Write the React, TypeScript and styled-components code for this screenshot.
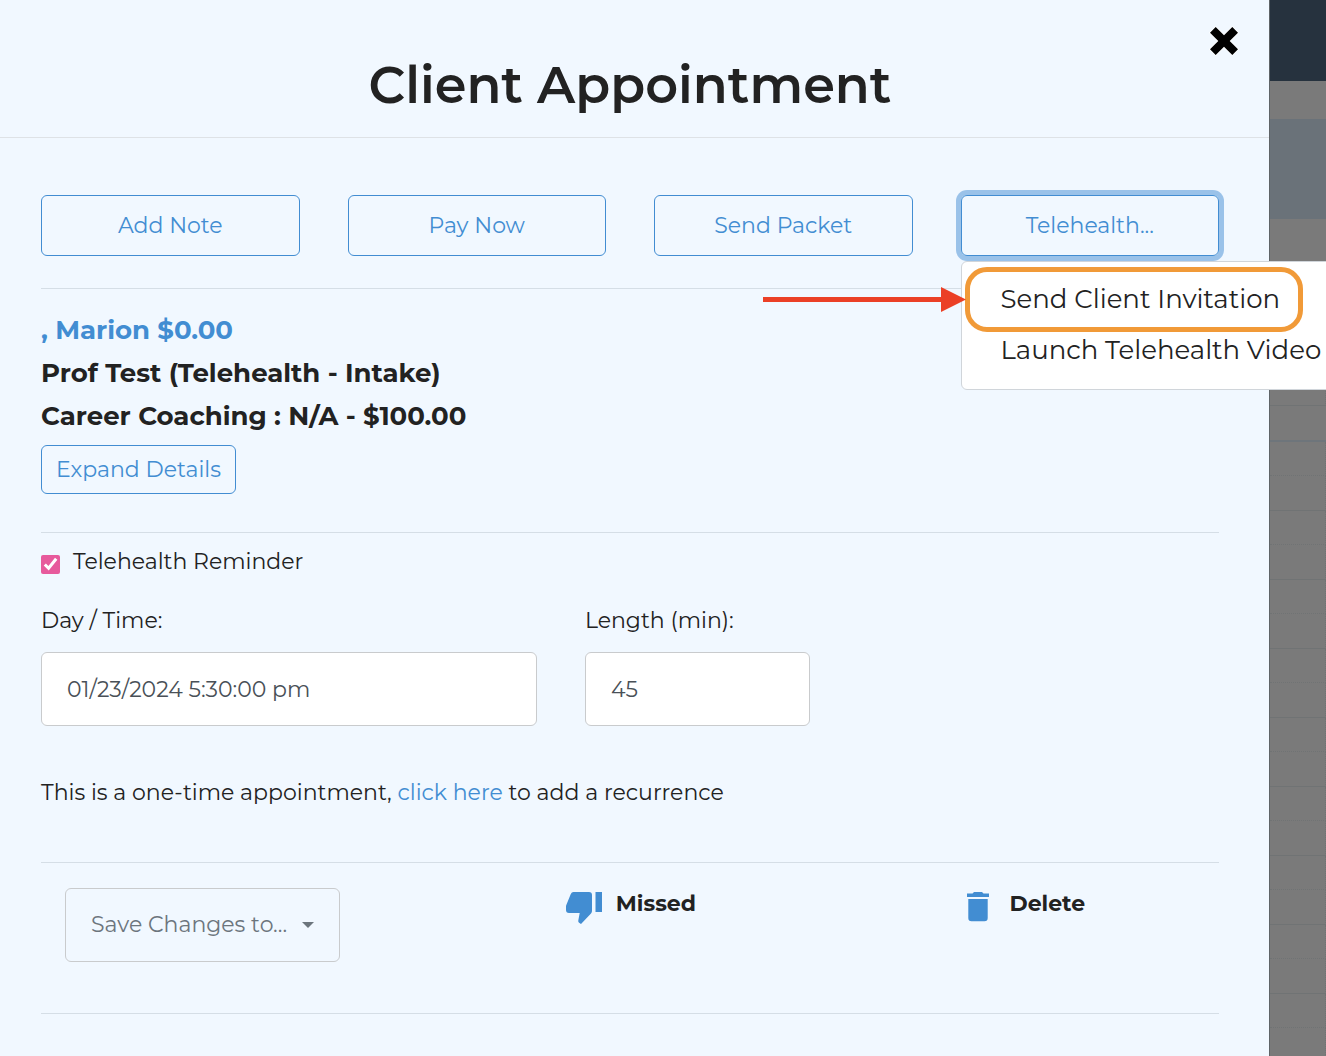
import React from "react";
import styled, { createGlobalStyle } from "styled-components";

const color = {
  panel: "#f1f8ff",
  blue: "#428dd2",
  ink: "#222222",
  rule: "#d5dee6",
  field: "#c9cbcd",
  muted: "#6c757d",
};

const GlobalStyle = createGlobalStyle`
  *, *::before, *::after { box-sizing: border-box; }
  body {
    margin: 0;
    overflow-x: hidden;
    background: #7a7a7a;
    color: ${color.ink};
    font-family: Montserrat, Inter, "Open Sans", sans-serif;
    font-size: 22px;
    line-height: 36px;
  }
  button, input { font: inherit; color: inherit; }
  a { color: ${color.blue}; text-decoration: none; }
  h1, h2, p { margin: 0; }
`;

const Screen = styled.div`
  display: grid;
  grid-template-columns: minmax(0, 1fr) 57px;
  min-height: 100vh;
  overflow: hidden;
`;

const Dialog = styled.section`
  position: relative;
  z-index: 1;
  background: ${color.panel};
`;

const Header = styled.header`
  position: relative;
  padding: 53px 50px 20px 41px;
  border-bottom: 1px solid #dee2e6;
  text-align: center;
`;

const Title = styled.h1`
  font-size: 51px;
  font-weight: 600;
  line-height: 64px;
`;

const CloseButton = styled.button`
  position: absolute;
  top: 24px;
  right: 28px;
  display: flex;
  padding: 0;
  border: 0;
  background: none;
  cursor: pointer;
`;

const Body = styled.div`
  padding: 57px 50px 42px 41px;
`;

const Section = styled.div<{ $pad: string }>`
  padding: ${(p) => p.$pad};
  border-bottom: 1px solid ${color.rule};
`;

const Actions = styled.div`
  display: grid;
  grid-template-columns: repeat(4, minmax(0, 1fr));
  gap: 48px;
`;

const MenuAnchor = styled.div`
  position: relative;
`;

const OutlineButton = styled.button<{ $wide?: boolean; $active?: boolean }>`
  width: ${(p) => (p.$wide ? "100%" : "auto")};
  padding: ${(p) => (p.$wide ? "12px" : "6px 14px")};
  border: 1px solid ${color.blue};
  border-radius: 6px;
  background: transparent;
  color: ${color.blue};
  line-height: 35px;
  white-space: nowrap;
  cursor: pointer;
  box-shadow: ${(p) => (p.$active ? "0 0 0 5px #9ac2e9" : "none")};
`;

const Menu = styled.div`
  position: absolute;
  top: 66px;
  left: 0;
  width: 388px;
  padding: 12px 0 13px;
  border: 1px solid #d0d5da;
  border-radius: 6px;
  background: #fff;
`;

const MenuItem = styled.button`
  display: block;
  width: 100%;
  padding: 0 39px;
  border: 0;
  background: none;
  font-size: 26px;
  line-height: 51px;
  text-align: left;
  white-space: nowrap;
  cursor: pointer;
`;

const Highlight = styled.span`
  position: absolute;
  top: 5px;
  left: 3px;
  width: 338px;
  height: 65px;
  border: 5px solid #f19a38;
  border-radius: 22px;
  pointer-events: none;
`;

const Pointer = styled.svg`
  position: absolute;
  top: 25px;
  left: -199px;
  pointer-events: none;
`;

const Client = styled.h2`
  font-size: 26px;
  font-weight: 700;
  line-height: 43px;
`;

const DetailsRow = styled.div`
  display: flex;
  padding-top: 7px;
`;

const Reminder = styled.label`
  display: flex;
  align-items: center;
  gap: 13px;
`;

const Tick = styled.input`
  width: 19px;
  height: 19px;
  margin: 4px 0 0;
  accent-color: #e75a9c;
`;

const Fields = styled.div`
  display: grid;
  grid-template-columns: 11fr 5fr 8fr;
  gap: 48px;
  padding: 23px 0 49px;
`;

const Field = styled.label`
  display: flex;
  flex-direction: column;
  gap: 13px;
`;

const TextBox = styled.input`
  width: 100%;
  height: 74px;
  padding: 0 25px;
  border: 1px solid ${color.field};
  border-radius: 6px;
  background: #fff;
  color: #495057;
`;

const Footer = styled.div`
  display: grid;
  grid-template-columns: 125fr 100fr 63fr;
  align-items: start;
  padding-left: 24px;
`;

const SaveButton = styled.button`
  display: flex;
  align-items: center;
  justify-self: start;
  gap: 15px;
  height: 74px;
  padding: 0 25px;
  border: 1px solid ${color.field};
  border-radius: 6px;
  background: transparent;
  color: ${color.muted};
  cursor: pointer;
`;

const Caret = styled.span`
  border: 6px solid transparent;
  border-top-color: currentColor;
  border-bottom: 0;
`;

const IconButton = styled.button<{ $gap: number }>`
  display: flex;
  align-items: flex-start;
  justify-self: start;
  gap: ${(p) => p.$gap}px;
  padding: 0;
  border: 0;
  background: none;
  font-weight: 700;
  line-height: 32px;
  cursor: pointer;

  svg { margin-top: 4px; }
`;

const Calendar = styled.aside`
  height: 0;
  min-height: 100%;
  overflow: hidden;
  border-left: 1px solid #5f6467;
`;

const Band = styled.div<{ $h: number; $bg: string }>`
  height: ${(p) => p.$h}px;
  background: ${(p) => p.$bg};
`;

const Slot = styled.div<{ $half?: boolean }>`
  height: ${(p) => (p.$half ? 34 : 35)}px;
  border-right: 1px dotted #707374;
  border-bottom: 1px ${(p) => (p.$half ? "dotted" : "solid")} #707374;
`;

const slots = Array.from({ length: 18 }, (_, i) => i);

export default function App() {
  return (
    <>
      <GlobalStyle />
      <Screen>
        <Dialog role="dialog" aria-labelledby="dialog-title">
          <Header>
            <Title id="dialog-title">Client Appointment</Title>
            <CloseButton aria-label="Close">
              <svg width="34" height="34" viewBox="0 0 34 34">
                <path
                  d="M8.7 3 17 11.3 25.3 3 31 8.7 22.7 17 31 25.3 25.3 31 17 22.7 8.7 31 3 25.3 11.3 17 3 8.7Z"
                  stroke="#fff"
                  strokeWidth="1.5"
                  paintOrder="stroke"
                />
              </svg>
            </CloseButton>
          </Header>

          <Body>
            <Section $pad="0 0 32px">
              <Actions>
                <OutlineButton $wide>Add Note</OutlineButton>
                <OutlineButton $wide>Pay Now</OutlineButton>
                <OutlineButton $wide>Send Packet</OutlineButton>
                <MenuAnchor>
                  <OutlineButton $wide $active aria-haspopup="menu" aria-expanded="true">
                    Telehealth...
                  </OutlineButton>
                  <Menu role="menu">
                    <MenuItem role="menuitem">Send Client Invitation</MenuItem>
                    <MenuItem role="menuitem">Launch Telehealth Video</MenuItem>
                    <Highlight />
                    <Pointer width="203" height="25" viewBox="0 0 203 25" fill="#eb4026">
                      <path d="M0 10H178V0L203 12.5 178 25V15H0Z" />
                    </Pointer>
                  </Menu>
                </MenuAnchor>
              </Actions>
            </Section>

            <Section $pad="20px 0 38px">
              <Client>
                <a href="#client">, Marion $0.00</a>
              </Client>
              <Client>Prof Test (Telehealth - Intake)</Client>
              <Client>Career Coaching : N/A - $100.00</Client>
              <DetailsRow>
                <OutlineButton>Expand Details</OutlineButton>
              </DetailsRow>
            </Section>

            <Section $pad="11px 0 51px">
              <Reminder>
                <Tick type="checkbox" defaultChecked />
                Telehealth Reminder
              </Reminder>
              <Fields>
                <Field>
                  Day / Time:
                  <TextBox type="text" defaultValue="01/23/2024 5:30:00 pm" />
                </Field>
                <Field>
                  Length (min):
                  <TextBox type="text" defaultValue="45" />
                </Field>
              </Fields>
              <p>
                This is a one-time appointment, <a href="#recurrence">click here</a> to add a recurrence
              </p>
            </Section>

            <Section $pad="25px 0 51px">
              <Footer>
                <SaveButton aria-haspopup="menu">
                  Save Changes to...
                  <Caret />
                </SaveButton>
                <IconButton $gap={14}>
                  <svg width="36" height="32" viewBox="0 0 36 32" fill={color.blue}>
                    <path d="M7.5 0H23Q26 0 26 3V19Q26 20.400 25 21.500L15 32 12.800 30.500Q12 29.600 12.300 28.500L13.700 21H3Q0 21 0 18V14.500Q0 13.800 .3 13L4.800 2Q5.600 0 7.500 0ZM29.500 0H36V20H29.500Z" />
                  </svg>
                  Missed
                </IconButton>
                <IconButton $gap={21}>
                  <svg width="22" height="30" viewBox="0 0 22 30" fill={color.blue}>
                    <path d="M7 0H15L16.500 1.500H22V5H0V1.500H5.500ZM1.300 7H20.700V26Q20.700 29.300 17.500 29.300H4.500Q1.300 29.300 1.300 26Z" />
                  </svg>
                  Delete
                </IconButton>
              </Footer>
            </Section>
          </Body>
        </Dialog>

        <Calendar aria-hidden="true">
          <Band $h={81} $bg="#26323e" />
          <Band $h={38} $bg="#7a7a7a" />
          <Band $h={100} $bg="#6a7279" />
          <Band $h={152} $bg="#7a7a7a" />
          <Slot />
          <Band $h={34} $bg="#7a7a7a" />
          <Band $h={2} $bg="#6e757b" />
          {slots.map((i) => (
            <Slot key={i} $half={i % 2 === 0} />
          ))}
        </Calendar>
      </Screen>
    </>
  );
}
